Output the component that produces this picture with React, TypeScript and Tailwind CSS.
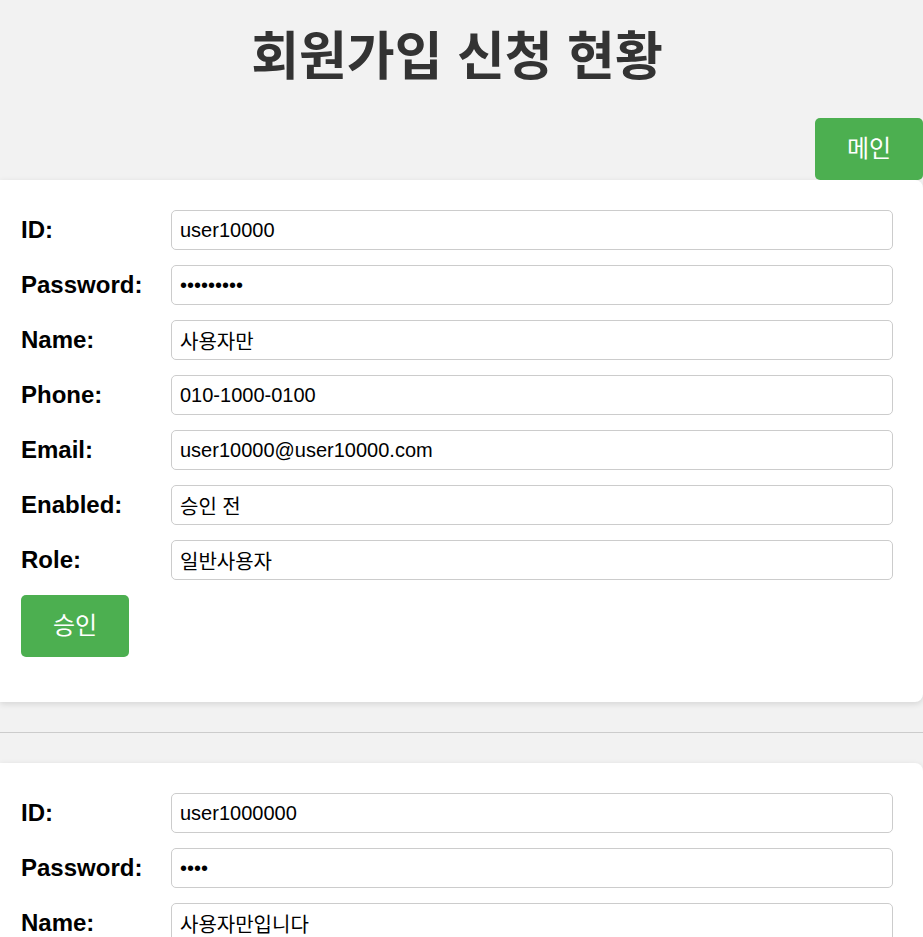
import React from 'react'

type Member = {
  id: string
  password: string
  name: string
  phone: string
  email: string
  enabled: string
  role: string
}

const members: Member[] = [
  {
    id: 'user10000',
    password: 'pass10000',
    name: '사용자만',
    phone: '010-1000-0100',
    email: 'user10000@user10000.com',
    enabled: '승인 전',
    role: '일반사용자',
  },
  {
    id: 'user1000000',
    password: 'pass',
    name: '사용자만입니다',
    phone: '010-1000-0000',
    email: 'user1000000@user1000000.com',
    enabled: '승인 전',
    role: '일반사용자',
  },
]

const font = "font-['Liberation_Sans','Noto_Sans_CJK_KR',sans-serif]"

const Row: React.FC<{ label: string; value: string; type?: string }> = ({
  label,
  value,
  type = 'text',
}) => (
  <div className="flex items-center">
    <label className="w-[150px] shrink-0 text-2xl font-bold text-black">
      {label}
    </label>
    <input
      type={type}
      value={value}
      readOnly
      className="h-10 w-[722px] rounded-[5px] border border-[#cccccc] bg-white px-[8px] text-[20px] text-black outline-none"
    />
  </div>
)

const MemberCard: React.FC<{ member: Member }> = ({ member }) => (
  <div className="rounded-r-lg bg-white pt-[30px] pb-[45px] pl-[21px] shadow-[0_2px_6px_rgba(0,0,0,0.12)]">
    <div className="flex flex-col gap-[15px]">
      <Row label="ID:" value={member.id} />
      <Row label="Password:" value={member.password} type="password" />
      <Row label="Name:" value={member.name} />
      <Row label="Phone:" value={member.phone} />
      <Row label="Email:" value={member.email} />
      <Row label="Enabled:" value={member.enabled} />
      <Row label="Role:" value={member.role} />
      <div>
        <button className="h-[62px] w-[108px] rounded-[5px] bg-[#4CAF50] text-2xl text-white">
          승인
        </button>
      </div>
    </div>
  </div>
)

const App: React.FC = () => {
  return (
    <div className={`min-h-screen bg-[#f2f2f2] ${font}`}>
      <div className="flex h-[110px] items-center justify-center pt-[4px] pr-[9px]">
        <h1 className="text-[52px] font-bold text-[#333333]">
          회원가입 신청 현황
        </h1>
      </div>
      <div className="mt-2 flex justify-end">
        <button className="h-[62px] w-[108px] rounded-[5px] bg-[#4CAF50] text-2xl text-white">
          메인
        </button>
      </div>
      {members.map((m, i) => (
        <div key={m.id}>
          {i > 0 && <hr className="my-[30px] border-t border-[#cccccc]" />}
          <MemberCard member={m} />
        </div>
      ))}
    </div>
  )
}

export default App
